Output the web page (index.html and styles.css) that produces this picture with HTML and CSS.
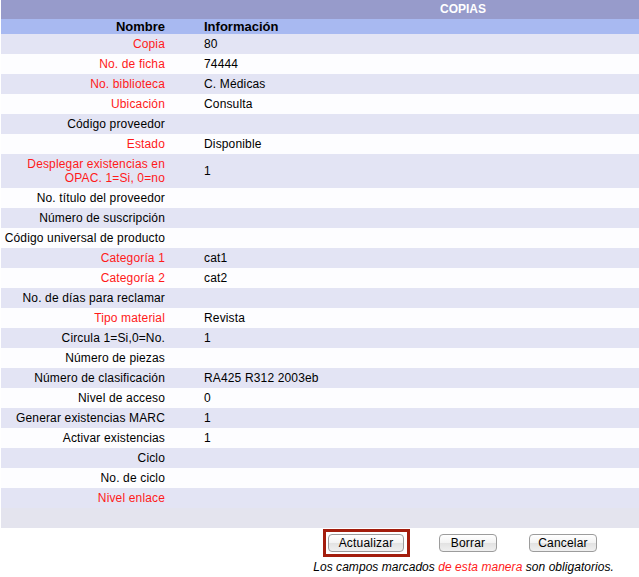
FILE: index.html
```html
<!DOCTYPE html>
<html lang="es">
<head>
<meta charset="utf-8">
<title>Copias</title>
<link rel="stylesheet" href="styles.css">
</head>
<body>
<table class="grid">
  <thead>
    <tr class="title"><th colspan="2"><span class="title-text">COPIAS</span></th></tr>
    <tr class="head"><th class="name">Nombre</th><th class="info">Información</th></tr>
  </thead>
  <tbody>
    <tr class="odd"><td class="name req">Copia</td><td class="info">80</td></tr>
    <tr class="even"><td class="name req">No. de ficha</td><td class="info">74444</td></tr>
    <tr class="odd"><td class="name req">No. biblioteca</td><td class="info">C. Médicas</td></tr>
    <tr class="even"><td class="name req">Ubicación</td><td class="info">Consulta</td></tr>
    <tr class="odd"><td class="name">Código proveedor</td><td class="info"></td></tr>
    <tr class="even"><td class="name req">Estado</td><td class="info">Disponible</td></tr>
    <tr class="odd tall"><td class="name req">Desplegar existencias en OPAC. 1=Si, 0=no</td><td class="info">1</td></tr>
    <tr class="even"><td class="name">No. título del proveedor</td><td class="info"></td></tr>
    <tr class="odd"><td class="name">Número de suscripción</td><td class="info"></td></tr>
    <tr class="even"><td class="name">Código universal de producto</td><td class="info"></td></tr>
    <tr class="odd"><td class="name req">Categoría 1</td><td class="info">cat1</td></tr>
    <tr class="even"><td class="name req">Categoría 2</td><td class="info">cat2</td></tr>
    <tr class="odd"><td class="name">No. de días para reclamar</td><td class="info"></td></tr>
    <tr class="even"><td class="name req">Tipo material</td><td class="info">Revista</td></tr>
    <tr class="odd"><td class="name">Circula 1=Si,0=No.</td><td class="info">1</td></tr>
    <tr class="even"><td class="name">Número de piezas</td><td class="info"></td></tr>
    <tr class="odd"><td class="name">Número de clasificación</td><td class="info">RA425 R312 2003eb</td></tr>
    <tr class="even"><td class="name">Nivel de acceso</td><td class="info">0</td></tr>
    <tr class="odd"><td class="name">Generar existencias MARC</td><td class="info">1</td></tr>
    <tr class="even"><td class="name">Activar existencias</td><td class="info">1</td></tr>
    <tr class="odd"><td class="name">Ciclo</td><td class="info"></td></tr>
    <tr class="even"><td class="name">No. de ciclo</td><td class="info"></td></tr>
    <tr class="odd"><td class="name req">Nivel enlace</td><td class="info"></td></tr>
    <tr class="foot"><td class="name"></td><td class="info"></td></tr>
  </tbody>
</table>
<div class="actions">
  <span class="focus"><button class="btn btn-update" type="button">Actualizar</button></span>
  <button class="btn btn-delete" type="button">Borrar</button>
  <button class="btn btn-cancel" type="button">Cancelar</button>
</div>
<p class="note">Los campos marcados <span class="req">de esta manera</span> son obligatorios.</p>
</body>
</html>
```
FILE: styles.css
```css
html, body {
  margin: 0;
  padding: 0;
  background: #ffffff;
}
body {
  font-family: "Liberation Sans", Arial, Helvetica, sans-serif;
  font-size: 12px;
  letter-spacing: 0.15px;
  color: #000;
}
.grid {
  margin-left: 1px;
  width: 638px;
  border-collapse: collapse;
  border-spacing: 0;
}
.grid th, .grid td {
  padding: 0;
  line-height: 14px;
  vertical-align: middle;
}
.title th {
  background: #979bcb;
  height: 19px;
  text-align: left;
  padding-left: 439px;
}
.title-text {
  color: #fff;
  font-weight: bold;
  font-size: 12px;
  letter-spacing: 0;
  display: inline-block;
  position: relative;
  top: -1px;
}
.head th {
  background: #a8b9f1;
  height: 15px;
  font-weight: bold;
  font-size: 13px;
  letter-spacing: 0;
}
.name {
  width: 164px;
  text-align: right;
  padding-right: 5px !important;
}
.info {
  text-align: left;
  padding-left: 34px !important;
}
.grid tbody td {
  height: 20px;
}
.grid tbody tr.tall td {
  height: 34px;
}
.odd { background: #e3e4f4; }
.even { background: #fdfdff; }
.foot { background: #e4e4ee; }
.req { color: #ff1a1a; }

.actions {
  display: flex;
  align-items: center;
  padding-left: 323px;
  height: 29px;
}
.focus {
  display: inline-flex;
  border: 3px solid #a31d0d;
  padding: 2px 3px 2px 2px;
}
.btn {
  font-family: "Liberation Sans", Arial, Helvetica, sans-serif;
  font-size: 12px;
  letter-spacing: 0.2px;
  color: #000;
  height: 18px;
  padding: 0;
  border: 1px solid #9c9c9c;
  border-radius: 4px;
  background: linear-gradient(#ffffff, #f3f3f3 50%, #e2e2e2 51%, #f0f0f0);
  line-height: 16px;
}
.btn-update { width: 76px; }
.btn-delete { width: 58px; margin-left: 29px; }
.btn-cancel { width: 68px; margin-left: 32px; }
.note {
  margin: 3px 0 0 0;
  width: 614px;
  text-align: right;
  font-style: italic;
  font-size: 12px;
  letter-spacing: 0.05px;
}
```
